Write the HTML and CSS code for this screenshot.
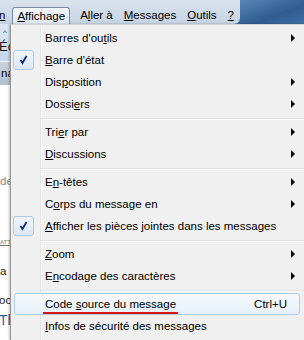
FILE: index.html
```html
<!DOCTYPE html>
<html>
<head>
<meta charset="utf-8">
<title>Affichage</title>
<link rel="stylesheet" href="styles.css">
</head>
<body>
<div class="screen">
    <div class="menubar">
        <div class="bar">
            <span class="mb cut"><u>n</u></span>
            <span class="mb open"><u>A</u>ffichage</span>
            <span class="mb">A<u>l</u>ler à</span>
            <span class="mb"><u>M</u>essages</span>
            <span class="mb"><u>O</u>utils</span>
            <span class="mb"><u>?</u></span>
        </div>
        <div class="glass"></div>
    </div>
    <div class="main">
        <div class="strip">
            <div class="tb"><span class="caret">^</span><span class="ec">Éc</span></div>
            <div class="hdr">na</div>
            <div class="pane">
                <span class="t1">de</span>
                <span class="t2">ATTA</span>
                <span class="t3">a</span>
                <span class="t4">oc</span>
                <span class="t5">Th</span>
            </div>
        </div>
        <div class="menu">
            <div class="item"><span class="box"></span><span class="label">Barres d'ou<u>t</u>ils</span><span class="arrow"></span></div>
            <div class="item"><span class="box on"><svg width="19" height="18" viewBox="0 0 19 18"><path d="M6.5 9 L8.5 12 L12.5 5" fill="none" stroke="#15268a" stroke-width="1.8"/></svg></span><span class="label"><u>B</u>arre d'état</span></div>
            <div class="item"><span class="box"></span><span class="label">Dis<u>p</u>osition</span><span class="arrow"></span></div>
            <div class="item"><span class="box"></span><span class="label">Dossi<u>e</u>rs</span><span class="arrow"></span></div>
            <div class="sep"></div>
            <div class="item"><span class="box"></span><span class="label">Tri<u>e</u>r par</span><span class="arrow"></span></div>
            <div class="item"><span class="box"></span><span class="label"><u>D</u>iscussions</span><span class="arrow"></span></div>
            <div class="sep"></div>
            <div class="item"><span class="box"></span><span class="label">E<u>n</u>-têtes</span><span class="arrow"></span></div>
            <div class="item"><span class="box"></span><span class="label">C<u>o</u>rps du message en</span><span class="arrow"></span></div>
            <div class="item"><span class="box on"><svg width="19" height="18" viewBox="0 0 19 18"><path d="M6.5 9 L8.5 12 L12.5 5" fill="none" stroke="#15268a" stroke-width="1.8"/></svg></span><span class="label"><u>A</u>fficher les pièces jointes dans les messages</span></div>
            <div class="sep"></div>
            <div class="item"><span class="box"></span><span class="label"><u>Z</u>oom</span><span class="arrow"></span></div>
            <div class="item"><span class="box"></span><span class="label">E<u>n</u>codage des caractères</span><span class="arrow"></span></div>
            <div class="sep"></div>
            <div class="item hot"><span class="box"></span><span class="label marked">Code <u>s</u>ource du message</span><span class="accel">Ctrl+U</span></div>
            <div class="item"><span class="box"></span><span class="label"><u>I</u>nfos de sécurité des messages</span></div>
        </div>
    </div>
</div>
</body>
</html>
```
FILE: styles.css
```css
body{
    margin:0;
    background-color:#3d6a9c;
    font-family:"Liberation Sans", Arial, sans-serif;
    font-size:11.5px;
    color:#000;
}

u{
    text-underline-offset:1px;
}

.screen{
    width:304px;
    height:340px;
    overflow:hidden;
    display:flex;
    flex-direction:column;
}

/* top menu bar */
.menubar{
    display:flex;
    height:24px;
}

.bar{
    width:240px;
    display:flex;
    align-items:flex-end;
    background:linear-gradient(#d9e3ee, #c6d3e2);
    border-radius:0 0 6px 0;
}

.glass{
    flex:1;
    background:linear-gradient(160deg, #5b86b6, #2f5d92 60%, #3f6fa5);
}

.mb{
    height:17px;
    line-height:16px;
    padding:0 5px 0 6px;
    box-sizing:border-box;
}

.cut{
    margin-left:-1px;
    padding:0 7px 0 0;
}

.open{
    padding:0 4px;
    border:1px solid #7a8ba0;
    border-bottom:none;
    border-radius:3px 3px 0 0;
    background:linear-gradient(#f4f7fa, #dde6ef);
    margin-right:4px;
}

/* window content behind the menu */
.main{
    flex:1;
    display:flex;
    min-height:0;
}

.strip{
    width:10px;
    overflow:hidden;
    display:flex;
    flex-direction:column;
    white-space:nowrap;
    background-color:#fff;
}

.tb{
    height:37px;
    background:linear-gradient(#dce8f5, #c4d6ea);
    display:flex;
    flex-direction:column;
    font-size:13px;
    line-height:13px;
}

.caret{
    font-size:8px;
    line-height:6px;
    height:6px;
    padding:6px 0 0 3px;
    color:#333;
}

.ec{
    margin-top:4px;
    margin-left:-1px;
    color:#111;
}

.hdr{
    height:23px;
    line-height:23px;
    background:linear-gradient(#c9d1db, #b2bfcd);
    border-top:1px solid #eef3f8;
    padding-left:1px;
}

.pane{
    flex:1;
    display:flex;
    flex-direction:column;
    color:#555;
}

.t1{
    margin-top:90px;
    color:#888;
}

.t2{
    margin-top:52px;
    font-size:6px;
    text-decoration:underline;
    color:#777;
}

.t3{
    margin-top:20px;
    color:#222;
}

.t4{
    margin-top:17px;
    color:#222;
    margin-left:-1px;
}

.t5{
    margin-top:6px;
    font-size:14px;
    color:#2e5e96;
    margin-left:-1px;
}

/* the dropdown */
.menu{
    width:294px;
    flex:none;
    box-sizing:border-box;
    border-left:1px solid #979797;
    border-top:1px solid #d4d4d4;
    padding-top:2px;
    background:linear-gradient(to right, #f0f0f0 29px, #e2e3e3 29px, #e2e3e3 30px, #fff 30px, #fff 31px, #f0f0f0 31px);
    box-shadow:-1px 0 2px rgba(0,0,0,0.25);
}

.item{
    height:22px;
    box-sizing:border-box;
    margin:0 4px 0 3px;
    border:1px solid transparent;
    border-radius:3px;
    display:flex;
    align-items:center;
    padding-right:4px;
    white-space:nowrap;
}

.box{
    width:21px;
    height:20px;
    margin-left:-2px;
    box-sizing:border-box;
    flex:none;
}

.box.on{
    border:1px solid #aec8e6;
    border-radius:3px;
    background:linear-gradient(#eef4fb, #dde8f5);
}

.box svg{
    display:block;
}

.label{
    margin-left:11px;
    line-height:14px;
}

.arrow{
    margin-left:auto;
    width:0;
    height:0;
    border-left:4px solid #000;
    border-top:4px solid transparent;
    border-bottom:4px solid transparent;
}

.accel{
    margin-left:auto;
    margin-right:8px;
}

.sep{
    height:0;
    margin:3px 0 1px 30px;
    border-top:1px solid #e0e0e0;
    border-bottom:1px solid #fff;
}

.hot{
    border-color:#aecfe8;
    background:linear-gradient(#f5f9fd, #e6f0fa);
}

.marked{
    position:relative;
}

.marked::after{
    content:"";
    position:absolute;
    left:-2px;
    right:-2px;
    top:15px;
    height:2px;
    background-color:#d9141b;
}
```
